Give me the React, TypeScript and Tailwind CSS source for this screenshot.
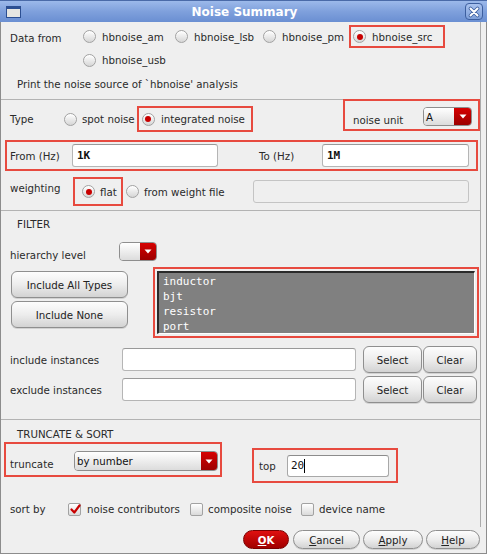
import React from "react";

const RED = "border-[#e74a3f]";

function Radio({ checked = false }: { checked?: boolean }) {
  return (
    <span className="inline-flex w-[13px] h-[13px] shrink-0 rounded-full border border-[#a2a2a2] bg-gradient-to-b from-white to-[#d6d6d6] items-center justify-center shadow-[inset_0_1px_1px_rgba(255,255,255,0.9)]">
      {checked && <span className="w-[6px] h-[6px] rounded-full bg-[#c80000]" />}
    </span>
  );
}

function Check({ checked = false }: { checked?: boolean }) {
  return (
    <span className="relative inline-flex w-[13px] h-[13px] shrink-0 rounded-[2px] border border-[#a2a2a2] bg-gradient-to-b from-white to-[#dadada]">
      {checked && (
        <svg className="absolute left-[1px] top-[0px]" width="11" height="11" viewBox="0 0 11 11">
          <path d="M1.5 5.5 L4.3 8.5 L9.5 1.5" fill="none" stroke="#c80000" strokeWidth="2.2" strokeLinecap="round" strokeLinejoin="round" />
        </svg>
      )}
    </span>
  );
}

function Tri() {
  return (
    <svg width="8" height="5" viewBox="0 0 8 5">
      <path d="M0.5 0.5 L7.5 0.5 L4 4.5 Z" fill="#ffffff" />
    </svg>
  );
}

function Btn({ children, className }: { children: React.ReactNode; className: string }) {
  return (
    <div
      className={
        "flex items-center justify-center border border-[#8f8f8f] bg-gradient-to-b from-[#fdfdfd] via-[#ededed] to-[#d3d3d3] text-[#222] shadow-[0_1px_0_rgba(0,0,0,0.12)] " +
        className
      }
    >
      {children}
    </div>
  );
}

export default function App() {
  return (
    <div className="w-[487px] h-[554px] flex flex-col bg-[#efefef] font-['DejaVu_Sans','Liberation_Sans',sans-serif] text-[10.25px] leading-[12px] text-[#2a2a2a] overflow-hidden">
      {/* Title bar */}
      <div className="h-[22px] shrink-0 flex items-center bg-gradient-to-b from-[#9cb9ea] via-[#7fa0dc] to-[#6a8fd2] border-t border-[#4a6aa8] relative">
        <div className="ml-[6px] w-[15px] h-[12px] border border-[#2c4f92] border-t-[3px] bg-[#e6e6e2]" />
        <div className="flex-1 text-center text-white font-bold text-[12px] leading-[14px] -ml-[21px] mr-[-2px]">Noise Summary</div>
        <div className="absolute right-[4px] top-[2px] w-[18px] h-[17px] rounded-[4px] border border-[#3d5f9f] bg-gradient-to-b from-[#a9c2ee] to-[#7e9fd9] flex items-center justify-center">
          <svg width="12" height="12" viewBox="0 0 12 12">
            <path d="M2.5 2.5 L9.5 9.5 M9.5 2.5 L2.5 9.5" stroke="#3d5f9f" strokeWidth="3.6" strokeLinecap="round" />
            <path d="M2.5 2.5 L9.5 9.5 M9.5 2.5 L2.5 9.5" stroke="#ffffff" strokeWidth="2" strokeLinecap="round" />
          </svg>
        </div>
      </div>

      <div className="flex-1 flex flex-col border-x border-b border-[#8c8c8c]">
        <div className="w-[480px] h-[505px] shrink-0 flex flex-col border-r border-[#ababab]">
          {/* Section 1 */}
          <div className="h-[77px] shrink-0 flex flex-col">
            <div className="mt-[3px] h-[23px] flex items-center">
              <span className="pl-[9px] w-[82px] mt-[2px]">Data from</span>
              <div className="w-[92px] flex items-center">
                <Radio />
                <span className="ml-[6px]">hbnoise_am</span>
              </div>
              <div className="w-[88px] flex items-center">
                <Radio />
                <span className="ml-[6px]">hbnoise_lsb</span>
              </div>
              <div className="w-[86px] flex items-center">
                <Radio />
                <span className="ml-[6px]">hbnoise_pm</span>
              </div>
              <div className={"w-[96px] h-[23px] border-2 " + RED + " flex items-center pl-[2px]"}>
                <Radio checked />
                <span className="ml-[6px]">hbnoise_src</span>
              </div>
            </div>
            <div className="mt-[4px] h-[16px] flex items-center pl-[82px]">
              <Radio />
              <span className="ml-[6px]">hbnoise_usb</span>
            </div>
            <div className="mt-[10px] pl-[16px]">Print the noise source of `hbnoise' analysis</div>
          </div>
          <div className="h-px shrink-0 bg-[#b3b3b3]" />

          {/* Section 2 */}
          <div className="h-[110px] shrink-0 flex flex-col">
            <div className="-mt-[1px] h-[33px] flex items-start">
              <div className="mt-[7px] h-[26px] w-[137px] flex items-center">
                <span className="pl-[9px] w-[63px]">Type</span>
                <Radio />
                <span className="ml-[5px]">spot noise</span>
              </div>
              <div className={"mt-[7px] w-[117px] h-[26px] border-2 " + RED + " flex items-center pl-[3px]"}>
                <Radio checked />
                <span className="ml-[6px]">integrated noise</span>
              </div>
              <div className={"ml-[90px] w-[137px] h-[32px] border-2 " + RED + " flex items-start pl-[8px] shrink-0"}>
                <span className="mt-[13px] w-[70px]">noise unit</span>
                <div className="mt-[6px] w-[49px] h-[19px] flex rounded-[4px] border border-[#8e8e8e] overflow-hidden">
                  <div className="flex-1 bg-gradient-to-b from-white to-[#dcdcdc] flex items-center pl-[2px] text-[#111]">A</div>
                  <div className="w-[17px] bg-gradient-to-b from-[#d60000] to-[#9c0000] flex items-center justify-center">
                    <Tri />
                  </div>
                </div>
              </div>
            </div>

            <div className={"mt-[8px] ml-[4px] w-[473px] h-[31px] border-2 " + RED + " flex items-center pl-[3px]"}>
              <span className="w-[62px]">From (Hz)</span>
              <div className="w-[146px] h-[23px] bg-white border border-[#b5b5b5] border-t-[#999] rounded-[3px] flex items-center pl-[4px] font-['DejaVu_Sans_Mono',monospace] font-bold text-[11px] text-[#111]">1K</div>
              <span className="ml-[41px] w-[63px]">To (Hz)</span>
              <div className="w-[147px] h-[23px] bg-white border border-[#b5b5b5] border-t-[#999] rounded-[3px] flex items-center pl-[4px] font-['DejaVu_Sans_Mono',monospace] font-bold text-[11px] text-[#111]">1M</div>
            </div>

            <div className="mt-[6px] h-[29px] flex items-start">
              <span className="pl-[9px] w-[72px] mt-[5px]">weighting</span>
              <div className={"w-[50px] h-[29px] border-2 " + RED + " flex items-center pl-[7px]"}>
                <Radio checked />
                <span className="ml-[5px]">flat</span>
              </div>
              <div className="w-[130px] h-[29px] flex items-center pl-[3px]">
                <Radio />
                <span className="ml-[5px]">from weight file</span>
              </div>
              <div className="mt-[3px] w-[216px] h-[23px] bg-[#efefef] border border-[#c4c4c4] rounded-[3px]" />
            </div>
          </div>
          <div className="h-px shrink-0 bg-[#b3b3b3]" />

          {/* Section 3: FILTER */}
          <div className="h-[208px] shrink-0 flex flex-col">
            <div className="mt-[7px] pl-[16px]">FILTER</div>
            <div className="mt-[12px] h-[19px] flex items-end">
              <span className="pl-[9px] w-[118px]">hierarchy level</span>
              <div className="w-[38px] h-[19px] flex rounded-[4px] border border-[#8e8e8e] overflow-hidden">
                <div className="flex-1 bg-gradient-to-b from-white to-[#dcdcdc]" />
                <div className="w-[16px] bg-gradient-to-b from-[#d60000] to-[#9c0000] flex items-center justify-center">
                  <Tri />
                </div>
              </div>
            </div>
            <div className="mt-[6px] flex items-start">
              <div className="ml-[10px] w-[117px] pt-[4px] flex flex-col gap-[3px]">
                <Btn className="h-[27px] rounded-[6px]">Include All Types</Btn>
                <Btn className="h-[27px] rounded-[6px]">Include None</Btn>
              </div>
              <div className={"ml-[25px] w-[326px] h-[71px] border-2 " + RED + " p-[2px] flex"}>
                <div className="flex-1 bg-[#808080] border-l-2 border-t-2 border-[#2a2a2a] border-r border-b border-r-white border-b-white pl-[4px] pt-[1px] font-['DejaVu_Sans_Mono',monospace] text-[11px] leading-[15px] text-white">
                  <div>inductor</div>
                  <div>bjt</div>
                  <div>resistor</div>
                  <div>port</div>
                </div>
              </div>
            </div>
            <div className="mt-[8px] h-[27px] flex items-center">
              <span className="pl-[9px] w-[121px]">include instances</span>
              <div className="w-[234px] h-[23px] bg-white border border-[#b5b5b5] border-t-[#999] rounded-[3px]" />
              <Btn className="ml-[7px] w-[59px] h-[27px] rounded-[6px]">Select</Btn>
              <Btn className="ml-[1px] w-[54px] h-[27px] rounded-[6px]">Clear</Btn>
            </div>
            <div className="mt-[3px] h-[27px] flex items-center">
              <span className="pl-[9px] w-[121px]">exclude instances</span>
              <div className="w-[234px] h-[23px] bg-white border border-[#b5b5b5] border-t-[#999] rounded-[3px]" />
              <Btn className="ml-[7px] w-[59px] h-[27px] rounded-[6px]">Select</Btn>
              <Btn className="ml-[1px] w-[54px] h-[27px] rounded-[6px]">Clear</Btn>
            </div>
          </div>
          <div className="h-px shrink-0 bg-[#b3b3b3]" />

          {/* Section 4: TRUNCATE & SORT */}
          <div className="flex-1 flex flex-col">
            <div className="mt-[8px] pl-[16px]">TRUNCATE &amp; SORT</div>
            <div className="mt-[2px] flex items-start">
              <div className={"ml-[3px] w-[218px] h-[35px] border-2 " + RED + " flex items-start pl-[4px]"}>
                <span className="mt-[14px] w-[64px]">truncate</span>
                <div className="mt-[7px] w-[144px] h-[20px] flex rounded-[4px] border border-[#8e8e8e] overflow-hidden">
                  <div className="flex-1 bg-gradient-to-b from-white to-[#dcdcdc] flex items-center pl-[2px] text-[#111]">by number</div>
                  <div className="w-[16px] bg-gradient-to-b from-[#d60000] to-[#9c0000] flex items-center justify-center">
                    <Tri />
                  </div>
                </div>
              </div>
              <div className={"ml-[30px] mt-[6px] w-[146px] h-[35px] border-2 " + RED + " flex items-center pl-[5px]"}>
                <span className="w-[28px]">top</span>
                <div className="w-[102px] h-[22px] bg-white border border-[#a8a8a8] border-t-[#8c8c8c] rounded-[3px] flex items-center pl-[3px] font-['DejaVu_Sans_Mono',monospace] text-[11px] text-[#111]">
                  20<span className="w-px h-[14px] bg-black" />
                </div>
              </div>
            </div>
            <div className="mt-[19px] h-[14px] flex items-center">
              <span className="pl-[9px] w-[67px]">sort by</span>
              <div className="w-[122px] flex items-center">
                <Check checked />
                <span className="ml-[6px]">noise contributors</span>
              </div>
              <div className="w-[111px] flex items-center">
                <Check />
                <span className="ml-[5px]">composite noise</span>
              </div>
              <div className="flex items-center">
                <Check />
                <span className="ml-[5px]">device name</span>
              </div>
            </div>
          </div>
        </div>

        {/* Bottom buttons */}
        <div className="pt-[3px] flex items-start pl-[242px]">
          <div className="w-[46px] h-[19px] rounded-full border border-[#7a0000] bg-gradient-to-b from-[#e01010] to-[#a00000] flex items-center justify-center text-white font-bold">
            <span><span className="underline">O</span>K</span>
          </div>
          <Btn className="ml-[4px] w-[67px] h-[19px] rounded-full">
            <span><span className="underline">C</span>ancel</span>
          </Btn>
          <Btn className="ml-[3px] w-[60px] h-[19px] rounded-full">
            <span><span className="underline">A</span>pply</span>
          </Btn>
          <Btn className="ml-[3px] w-[54px] h-[19px] rounded-full">
            <span><span className="underline">H</span>elp</span>
          </Btn>
        </div>
      </div>
    </div>
  );
}
